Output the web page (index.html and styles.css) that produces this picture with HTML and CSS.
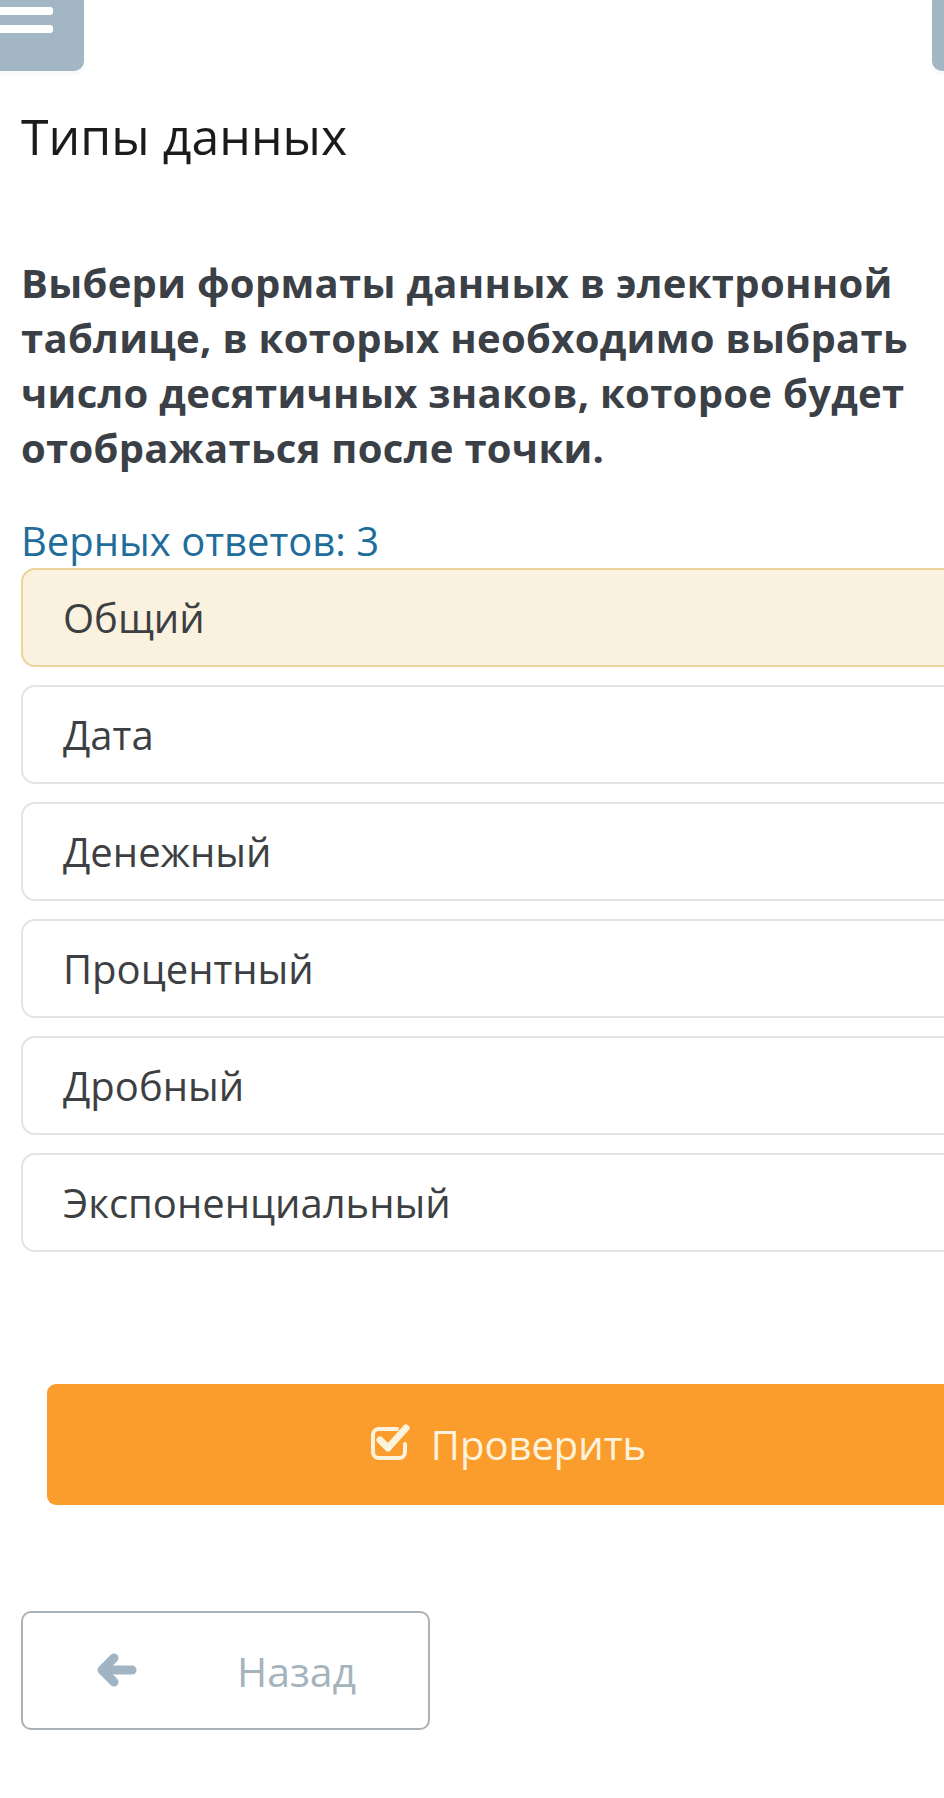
FILE: index.html
```html
<!DOCTYPE html>
<html>
	<head>
		<meta charset="utf-8">
		<title>Типы данных</title>
		<link rel="stylesheet" href="styles.css">
	</head>
	<body>
		<!--page-->
		<div class="page">
			<!--top bar-->
			<div class="topbar">
				<div class="menu-btn">
					<span class="menu-line"></span>
					<span class="menu-line"></span>
				</div>
				<div class="side-btn"></div>
			</div>
			<!--/top bar-->
			<h1 class="title">Типы данных</h1>
			<p class="question">Выбери форматы данных в электронной таблице, в которых необходимо выбрать число десятичных знаков, которое будет отображаться после точки.</p>
			<div class="answers-count">Верных ответов: 3</div>
			<!--options-->
			<ul class="options">
				<li class="option selected">Общий</li>
				<li class="option">Дата</li>
				<li class="option">Денежный</li>
				<li class="option">Процентный</li>
				<li class="option">Дробный</li>
				<li class="option">Экспоненциальный</li>
			</ul>
			<!--/options-->
			<button type="button" class="check-btn">
				<svg class="check-icon" width="44" height="36" viewBox="0 0 44 36">
					<path d="M27 5 H9 A6 6 0 0 0 3 11 V28 A6 6 0 0 0 9 34 H29 A6 6 0 0 0 35 28 V20" fill="none" stroke="#fdf3dc" stroke-width="4" stroke-linecap="round"/>
					<path d="M10 16 L18 24 L36 4" fill="none" stroke="#fdf3dc" stroke-width="7" stroke-linecap="round" stroke-linejoin="round"/>
				</svg>
				<span>Проверить</span>
			</button>
			<button type="button" class="back-btn">
				<svg class="back-icon" width="42" height="34" viewBox="0 0 42 34">
					<path d="M8 17 H37" fill="none" stroke="#a1b4c3" stroke-width="9" stroke-linecap="round"/>
					<path d="M19 5 L7 17 L19 29" fill="none" stroke="#a1b4c3" stroke-width="9" stroke-linecap="round" stroke-linejoin="round"/>
				</svg>
				<span>Назад</span>
			</button>
		</div>
		<!--/page-->
	</body>
</html>
```

FILE: styles.css
```css
html, body{
	margin: 0;
	overflow-x: hidden;
	background: #fff;
}
body{
	font-family: "Open Sans", "Noto Sans", sans-serif;
}
.page{
	width: 1016px;
	padding: 0 21px;
	box-sizing: border-box;
}
.topbar{
	display: flex;
	justify-content: space-between;
	margin: 0 -21px;
}
.menu-btn, .side-btn{
	width: 84px;
	height: 71px;
	background: #a3b6c4;
	box-shadow: 0 3px 4px rgba(0, 0, 0, 0.04);
}
.menu-btn{
	border-bottom-right-radius: 10px;
	display: flex;
	flex-direction: column;
	gap: 10px;
	padding-top: 7px;
	box-sizing: border-box;
}
.menu-line{
	display: block;
	width: 53px;
	height: 8px;
	background: #fff;
	border-radius: 0 3px 3px 0;
}
.side-btn{
	border-bottom-left-radius: 10px;
}
.title{
	margin: 30px 0 0;
	font-size: 50px;
	line-height: 70px;
	font-weight: normal;
	color: #1b1b1b;
}
.question{
	margin: 84px 0 0;
	font-size: 40px;
	line-height: 55px;
	letter-spacing: 0.3px;
	font-weight: bold;
	color: #3b4047;
}
.answers-count{
	margin-top: 41px;
	font-size: 40px;
	line-height: 50px;
	color: #1f6d9b;
}
.options{
	list-style: none;
	margin: 2px 0 0;
	padding: 0;
}
.option{
	height: 99px;
	box-sizing: border-box;
	margin-bottom: 18px;
	padding-left: 40px;
	display: flex;
	align-items: center;
	font-size: 40px;
	line-height: 50px;
	color: #3d3f42;
	background: #fff;
	border: 2px solid #e3e4e6;
	border-radius: 14px;
}
.option:last-child{
	margin-bottom: 0;
}
.option.selected{
	background: #faf2df;
	border-color: #e9d49b;
}
.check-btn{
	display: flex;
	align-items: center;
	justify-content: center;
	gap: 17px;
	width: calc(100% - 52px);
	height: 121px;
	margin: 132px 26px 0;
	border: none;
	border-radius: 9px;
	background: #fb9d2d;
	color: #fdf3dc;
	font-family: inherit;
	font-size: 40px;
	line-height: 50px;
}
.check-icon{
	margin-top: -6px;
}
.back-btn{
	display: flex;
	align-items: center;
	justify-content: center;
	gap: 100px;
	width: 409px;
	height: 119px;
	margin-top: 106px;
	border: 2px solid #aab2b8;
	border-radius: 10px;
	background: #fff;
	color: #a5b3bd;
	font-family: inherit;
	font-size: 41px;
	line-height: 50px;
}
.back-icon{
	margin-top: -2px;
}
```
